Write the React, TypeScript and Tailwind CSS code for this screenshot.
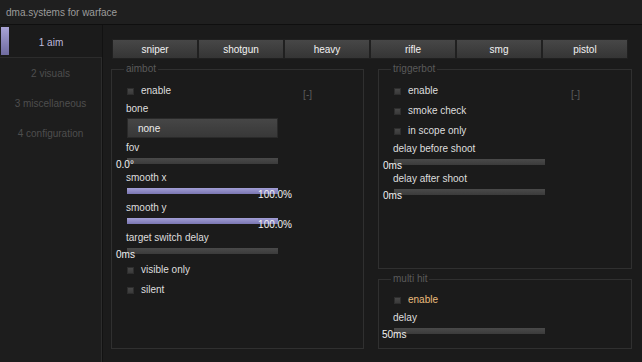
import React from "react";

function Check({ label, orange, mark }: { label: string; orange?: boolean; mark?: boolean }) {
  return (
    <div className="flex h-[20px] items-center">
      <div className="ml-[15px] h-[7px] w-[7px] border border-[#2e2e2e] bg-gradient-to-b from-[#474747] to-[#3a3a3a]" />
      <span className={"ml-[7px] leading-[12px] " + (orange ? "text-[#e9bc7d]" : "text-[#dedede]")}>{label}</span>
      {mark ? <span className="ml-auto mr-[51px] mt-[6px] text-[#5c5c5c]">[-]</span> : null}
    </div>
  );
}

function Slider({ label, value, full, pos }: { label: string; value: string; full?: boolean; pos: "start" | "end" | "start2" }) {
  const vcls =
    pos === "end"
      ? "absolute right-[-14px] top-[1px] leading-[11px] text-[#f0f0f0]"
      : pos === "start2"
      ? "absolute left-[-12px] top-[1px] leading-[11px] text-[#f0f0f0]"
      : "absolute left-[-11px] top-[1px] leading-[11px] text-[#f0f0f0]";
  return (
    <div className="h-[30px]">
      <div className="ml-[14px] h-[15px] leading-[15px] text-[#dedede]">{label}</div>
      <div className="relative ml-[15px] mt-[3px] h-[6px] w-[151px] bg-gradient-to-b from-[#4a4a4a] to-[#3b3b3b]">
        {full ? <div className="h-full w-full bg-gradient-to-b from-[#a39fd6] to-[#7a76b2]" /> : null}
        <span className={vcls}>{value}</span>
      </div>
    </div>
  );
}

function Group({ title, className, children }: { title: string; className: string; children: React.ReactNode }) {
  return (
    <fieldset className={"border border-[#303030] " + className}>
      <legend className="ml-[12px] px-[2px] leading-[12px] text-[#5a5a5a]">{title}</legend>
      {children}
    </fieldset>
  );
}

export default function App() {
  const tabs = ["sniper", "shotgun", "heavy", "rifle", "smg", "pistol"];
  return (
    <div className="flex h-[362px] w-[642px] flex-col overflow-hidden bg-[#1b1b1b] font-['Liberation_Sans',Arial,sans-serif] text-[10px]">
      <div className="flex h-[25px] shrink-0 items-center border-b border-[#0f0f0f] bg-[#1f1f1f] pl-[6px] text-[#9c9c9c]">
        dma.systems for warface
      </div>
      <div className="flex flex-1">
        <div className="flex w-[103px] flex-col border-r border-[#121212]">
          <div className="flex h-[32px] items-center">
            <div className="ml-[1px] h-[28px] w-[8px] bg-gradient-to-b from-[#a9a4d6] to-[#6f6ba0]" />
            <div className="mr-[9px] mt-[3px] flex-1 text-center text-[#bdb9dc]">1 aim</div>
          </div>
          <div className="flex-1 border-r border-t border-[#2c2c2c] bg-[#1d1d1d] text-[#4e4e4e]">
            <div className="flex h-[30px] items-center justify-center">2 visuals</div>
            <div className="flex h-[30px] items-center justify-center">3 miscellaneous</div>
            <div className="flex h-[30px] items-center justify-center">4 configuration</div>
          </div>
        </div>
        <div className="flex-1 pl-[8px] pt-[14px]">
          <div className="ml-[1px] flex w-[516px]">
            {tabs.map((t) => (
              <div
                key={t}
                className="flex h-[20px] w-[86px] items-center justify-center border border-[#202020] bg-gradient-to-b from-[#474747] to-[#353535] text-[#f2f2f2]"
              >
                {t}
              </div>
            ))}
          </div>
          <div className="mt-[4px] flex gap-[14px]">
            <Group title="aimbot" className="h-[286px] w-[253px]">
              <div className="mt-[6px]">
                <Check label="enable" mark />
                <div className="ml-[14px] h-[15px] leading-[15px] text-[#dedede]">bone</div>
                <div className="ml-[15px] mt-[2px] flex h-[20px] w-[151px] items-center border border-[#2a2a2a] bg-gradient-to-b from-[#464646] to-[#383838] pl-[10px] text-[#ececec]">
                  none
                </div>
                <div className="h-[2px]" />
                <Slider label="fov" value="0.0°" pos="start" />
                <Slider label="smooth x" value="100.0%" full pos="end" />
                <Slider label="smooth y" value="100.0%" full pos="end" />
                <Slider label="target switch delay" value="0ms" pos="start" />
                <Check label="visible only" />
                <Check label="silent" />
              </div>
            </Group>
            <div className="flex flex-col gap-[4px]">
              <Group title="triggerbot" className="h-[206px] w-[254px]">
                <div className="mt-[6px]">
                  <Check label="enable" mark />
                  <Check label="smoke check" />
                  <Check label="in scope only" />
                  <Slider label="delay before shoot" value="0ms" pos="start" />
                  <Slider label="delay after shoot" value="0ms" pos="start" />
                </div>
              </Group>
              <Group title="multi hit" className="h-[76px] w-[254px]">
                <div className="mt-[5px]">
                  <Check label="enable" orange />
                  <Slider label="delay" value="50ms" pos="start2" />
                </div>
              </Group>
            </div>
          </div>
        </div>
      </div>
    </div>
  );
}
